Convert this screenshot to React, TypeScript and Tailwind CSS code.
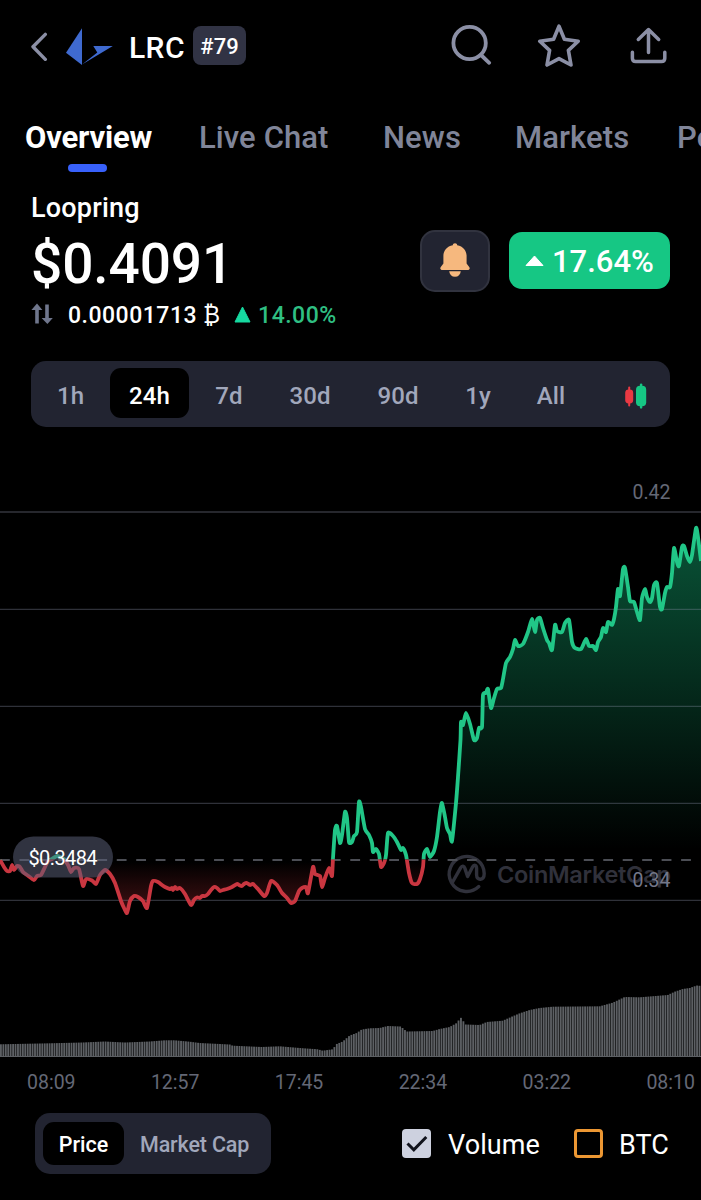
import clsx from "clsx";

type Point = [number, number];

const tabs = [
  { label: "Live Chat", width: "w-[184px]" },
  { label: "News", width: "w-[132px]" },
  { label: "Markets", width: "w-[162px]" },
  { label: "Portfolio", width: "w-[140px]" },
];

const ranges = [
  { label: "1h", width: "w-[79px]" },
  { label: "24h", width: "w-[79px]", active: true },
  { label: "7d", width: "w-[80px]" },
  { label: "30d", width: "w-[82px]" },
  { label: "90d", width: "w-[94px]" },
  { label: "1y", width: "w-[66px]" },
  { label: "All", width: "w-[80px]" },
];

const times = ["08:09", "12:57", "17:45", "22:34", "03:22", "08:10"];

const gridLines = [609, 706, 803, 900];
const BASELINE = 859.5;
const VOLUME_BOTTOM = 1057;

const price: Point[] = [
  [0, 860], [4, 867], [7, 871], [10, 871], [12, 865], [14, 870], [17, 866], [20, 867], [23, 872], [27, 875],
  [34, 880], [37, 876], [41, 875], [45, 867], [48, 861], [52, 859], [57, 856], [64, 859], [68, 865], [71, 872],
  [74, 868], [79, 869], [83, 886], [86, 879], [92, 880.5], [96, 884], [100, 875], [105, 870], [110, 874],
  [115, 883], [121, 901], [124, 908], [127, 913], [130, 901], [134, 896], [138, 897], [143, 901], [147, 908],
  [151, 886], [153, 881], [158, 882], [162, 885], [165, 887], [170, 889], [172, 888], [173, 890], [175, 887],
  [177, 889], [180, 888], [185, 894], [191, 905], [194, 900], [197, 897.5], [200, 898], [202, 896], [205, 896],
  [208, 894], [211, 890], [214, 887], [217, 888], [220, 891], [223, 890], [227, 889], [232, 887], [237, 884],
  [239, 885], [242, 886], [244, 884], [247, 883], [250, 885], [253, 884], [258, 889], [264, 896], [267, 893],
  [271, 881], [277, 885], [282, 893], [287, 898], [291, 903], [295, 901], [299, 891], [302, 888], [306, 887],
  [308, 893], [313, 867], [315, 874], [320, 876], [322, 887], [325, 878], [329, 868], [332, 876], [333, 858],
  [335, 830], [337, 826], [340, 843], [342, 835], [345, 812], [347, 818], [349, 842], [352, 842], [354, 836],
  [357, 832], [359, 802], [361, 807], [365, 829], [369, 835], [372, 843], [373, 852], [376, 849], [379, 854],
  [381, 867], [384, 863], [386, 855], [388, 833], [393, 836], [397, 842], [401, 850], [403, 848], [406, 855],
  [409, 873], [412, 883], [417, 884], [420, 879], [423, 867], [424, 854], [427, 849], [430, 857], [434, 851],
  [437, 837], [440, 812], [442, 803], [445, 817], [447, 828], [450, 834], [452, 841], [456, 803], [458, 777],
  [460.5, 740], [461, 722], [463, 725], [466, 713], [470, 724], [474, 740], [477, 738], [479, 728], [482, 727],
  [483, 695], [486, 693], [488, 689], [491, 708], [494, 698], [497, 689], [501, 688], [503, 679], [506, 663],
  [510, 657], [513, 649], [515, 640], [518, 646], [523, 644], [528, 632], [532, 619], [535, 632], [537, 620],
  [540, 618], [543, 628], [547, 640], [549, 643], [552, 650], [555, 625], [557, 631], [562, 632], [565, 623],
  [569, 620], [572, 642], [575, 648], [581, 649], [586, 639], [589, 646], [593, 646], [596, 650], [598, 642],
  [601, 637], [603, 628], [606, 632], [608, 622], [612, 625], [614, 619], [616, 607], [618, 589], [620, 596],
  [623, 569], [625, 568], [628, 587], [630, 601], [634, 602], [637, 612], [640, 620], [642, 598], [645, 589],
  [647, 597], [650, 602], [652, 598], [654, 585], [657, 583], [660, 607], [662, 609], [665, 593], [667, 587],
  [670, 587], [672, 573], [674, 548], [677, 562], [679, 566], [682, 547], [684, 546], [687, 556], [690, 562],
  [692, 555], [696, 528], [698, 537], [701, 561],
];

// Top edge of the volume histogram
const volume: Point[] = [
  [0, 1044.3], [50, 1043.3], [83, 1042.5], [105, 1041.5], [125, 1042.5], [150, 1041.5], [165, 1040.3],
  [175, 1040.3], [190, 1041.7], [200, 1043], [230, 1044.5], [233, 1045.7], [262, 1047], [280, 1046.3],
  [300, 1048], [318, 1049.3], [323, 1050.7], [333, 1049.3], [337, 1044], [343, 1041.5], [350, 1035.5],
  [357, 1033], [362, 1029.5], [370, 1028.3], [380, 1028], [388, 1026], [401, 1026.5], [407, 1031.5],
  [433, 1031], [440, 1029], [450, 1027], [457, 1023], [461, 1017.5], [466, 1024.5], [480, 1025], [487, 1022],
  [503, 1020.7], [512, 1016.7], [520, 1013.3], [530, 1010], [540, 1008], [553, 1006.7], [600, 1006.3],
  [613, 1002.7], [625, 997], [640, 997.3], [668, 995], [675, 991.7], [683, 989], [690, 988], [697, 985.5],
  [702, 986],
];

const BAR_COUNT = 288;
const BAR_STEP = 701 / BAR_COUNT;

function volumeTop(x: number) {
  const next = Math.max(1, volume.findIndex(([px]) => px >= x));
  const [x0, y0] = volume[next - 1];
  const [x1, y1] = volume[next];
  return y0 + ((y1 - y0) * (x - x0)) / (x1 - x0);
}

const bars = Array.from({ length: BAR_COUNT }, (_, i) => {
  const x = i * BAR_STEP;
  return { x, top: volumeTop(x + BAR_STEP / 2) };
});

// Cardinal spline through the points, kept tight so the peaks don't overshoot
function smooth(points: Point[]) {
  const k = 0.1;
  return points.reduce((d, [x, y], i) => {
    if (i === 0) return `M${x},${y}`;
    const [px, py] = points[i - 1];
    const [bx, by] = points[Math.max(0, i - 2)];
    const [nx, ny] = points[Math.min(points.length - 1, i + 1)];
    return `${d}C${px + (x - bx) * k},${py + (y - by) * k} ${x - (nx - px) * k},${y - (ny - py) * k} ${x},${y}`;
  }, "");
}

const linePath = smooth(price);
const areaPath = `${linePath}L701,${BASELINE}L0,${BASELINE}Z`;

function Header() {
  return (
    <header className="flex h-[92px] items-center pl-[30px] pr-[34px]">
      <svg className="h-[30px] w-[18px]" viewBox="0 0 18 30" fill="none">
        <path d="M15.3 3.4 3 15.7 15.3 28.4" stroke="#8b8fa5" strokeWidth="3.4" strokeLinecap="round" strokeLinejoin="round" />
      </svg>
      <svg className="ml-[18px] h-[38px] w-[48px]" viewBox="0 0 48 38" fill="#3f6ad0">
        <path d="M16 1.3 0 25.7 16 38Z" />
        <path d="M16 37.4 46.8 19H27.3L31.3 25.4Z" />
      </svg>
      <div className="ml-[15px] w-[64px] pt-[3px] text-[30px] leading-9 font-medium tracking-[0.4px] text-white">LRC</div>
      <span className="mb-px flex h-[39px] w-[53px] items-center justify-center rounded-lg bg-[#313344] pt-[2px] text-[22px] font-medium text-white">
        #79
      </span>
      <div className="mb-[2px] ml-auto flex items-center">
        <svg className="h-[44px] w-[44px]" viewBox="0 0 44 44" fill="none" stroke="#8b8fa5" strokeWidth="3.8" strokeLinecap="round">
          <circle cx="19.6" cy="20" r="16.2" />
          <path d="m31 32 8.2 7.8" />
        </svg>
        <svg className="ml-[43px] h-[44px] w-[44px]" viewBox="0 0 44 44" fill="none" stroke="#8b8fa5" strokeWidth="3.6" strokeLinejoin="round">
          <path d="M22 3.2 27.4 16.2 41.2 18.2 31.4 27.4 34 42 22 35.6 10 42 12.6 27.4 2.8 18.2 16.6 16.2Z" />
        </svg>
        <svg className="ml-[49px] h-[44px] w-[37px]" viewBox="0 0 37 44" fill="none" stroke="#8b8fa5" strokeWidth="3.5" strokeLinecap="round" strokeLinejoin="round">
          <path d="M18.5 29.5V7M8.3 16.5 18.5 6.6 28.7 16.5M2.4 29.2V35.2Q2.4 38.5 5.7 38.5H31.5Q34.8 38.5 34.8 35.2V29.2" />
        </svg>
      </div>
    </header>
  );
}

function TabBar() {
  return (
    <nav className="flex h-[98px] overflow-hidden pl-[25px] text-[31px] leading-[36px] whitespace-nowrap">
      <div className="flex w-[174px] shrink-0 flex-col pt-[28px] font-bold text-white">
        <span className="tracking-[-0.2px]">Overview</span>
        <span className="mt-[8px] ml-[43px] h-[8px] w-[39px] rounded-full bg-[#3861fb]" />
      </div>
      {tabs.map((tab) => (
        <div key={tab.label} className={clsx("shrink-0 pt-[28px] font-medium tracking-[0.1px] text-[#808599]", tab.width)}>
          {tab.label}
        </div>
      ))}
    </nav>
  );
}

function PriceSummary() {
  return (
    <section className="flex h-[171px] justify-between pt-px pl-[31px] pr-[31px] text-white">
      <div>
        <div className="h-[35px] text-[27px] leading-[35px] font-medium tracking-[0.2px]">Loopring</div>
        <div className="h-[76px] text-[55px] leading-[76px] font-medium tracking-[-0.1px]">$0.4091</div>
        <div className="flex h-[28px] items-center text-[23px] leading-[28px] font-medium">
          <svg className="mb-[4px] h-[22px] w-[23px]" viewBox="0 0 23 22" fill="#6f768c">
            <path d="M6 .5 11.4 7H7.8V20.5H4.2V7H.4ZM14.2 1.5H17.8V15H21.8L16.4 21 10.6 15H14.2Z" />
          </svg>
          <span className="ml-[14px] tracking-[0.5px]">0.00001713</span>
          <span className="ml-[6px] font-normal">₿</span>
          <svg className="mb-[3px] ml-[14px] h-[17px] w-[17px]" viewBox="0 0 17 17">
            <path d="M8.5 1 16 16H1Z" fill="#16d9a0" stroke="#16d9a0" strokeLinejoin="round" />
          </svg>
          <span className="ml-[7px] tracking-[0.5px] text-[#2fbf83]">14.00%</span>
        </div>
      </div>
      <div className="flex items-start gap-[19px] pt-[39px]">
        <div className="flex h-[62px] w-[70px] items-center justify-center rounded-[15px] border-2 border-[#31333f] bg-[#222431]">
          <svg className="mb-[2px] h-[36px] w-[32px]" viewBox="0 0 32 36" fill="#f6b87e">
            <path d="M16 1.2C17.3 1.2 18.2 2 18.2 3.3 24 4.3 27.6 8.6 27.6 14V21.5L30.4 25.3Q31.4 27.5 29.4 27.9H2.6Q.6 27.5 1.6 25.3L4.4 21.5V14C4.4 8.6 8 4.3 13.8 3.3 13.8 2 14.7 1.2 16 1.2Z" />
            <path d="M10.2 29.3H21.8C21.4 32.8 19.3 34.8 16 34.8S10.6 32.8 10.2 29.3Z" />
          </svg>
        </div>
        <div className="mt-[2px] flex h-[57px] w-[161px] items-center rounded-[13px] bg-[#16c784] pl-[16px]">
          <svg className="h-[12px] w-[19px]" viewBox="0 0 19 12">
            <path d="M9.5 1 18 10.5H1Z" fill="#fff" stroke="#fff" strokeLinejoin="round" />
          </svg>
          <span className="ml-[8px] pt-[4px] text-[31px] font-medium">17.64%</span>
        </div>
      </div>
    </section>
  );
}

function RangePicker() {
  return (
    <div className="mx-[31px] flex h-[66px] items-center rounded-[15px] bg-[#222431] text-[24px] font-medium text-[#a1a7bb]">
      {ranges.map((range) => (
        <div
          key={range.label}
          className={clsx(
            "mb-[2px] flex h-[50px] items-center justify-center pt-[5px] tracking-[0.1px]",
            range.width,
            range.active && "rounded-[11px] bg-black text-white",
          )}
        >
          {range.label}
        </div>
      ))}
      <svg className="mt-[3px] ml-[33px] h-[26px] w-[24px]" viewBox="0 0 24 26">
        <rect x="1.2" y="6.5" width="8" height="14" rx="3.4" fill="#ea3943" />
        <rect x="4.2" y="3.4" width="2" height="20" rx="1" fill="#ea3943" />
        <rect x="12" y="2.8" width="10.2" height="20.4" rx="4" fill="#16c784" />
        <rect x="15.9" y=".4" width="2.4" height="25.2" rx="1.2" fill="#16c784" />
      </svg>
    </div>
  );
}

function PriceChart() {
  return (
    <svg className="mt-[43px] block h-[590px] w-[701px]" viewBox="0 470 701 590" fill="none">
      <defs>
        <linearGradient id="gain" gradientUnits="userSpaceOnUse" x1="0" y1="528" x2="0" y2="850">
          <stop offset="0" stopColor="#16c784" stopOpacity="0.42" />
          <stop offset="1" stopColor="#16c784" stopOpacity="0" />
        </linearGradient>
        <linearGradient id="loss" gradientUnits="userSpaceOnUse" x1="0" y1="862" x2="0" y2="914">
          <stop offset="0" stopColor="#ea3943" stopOpacity="0" />
          <stop offset="1" stopColor="#ea3943" stopOpacity="0.3" />
        </linearGradient>
        <clipPath id="above">
          <rect x="0" y="470" width="701" height={BASELINE - 470} />
        </clipPath>
        <clipPath id="below">
          <rect x="0" y={BASELINE} width="701" height="100" />
        </clipPath>
      </defs>

      {/* Watermark */}
      <g stroke="#30313b" strokeWidth="3.4" strokeLinecap="round" strokeLinejoin="round">
        <path d="M478.8 886.6A17.5 17.5 0 1 1 484.2 873.5C484.2 880.8 476.6 881 476.6 875V868.5C476.6 864.6 474 864.4 472.4 867.2L467.6 876.5 465 868.6C464 865.4 462 865.4 460.6 867.8L452.6 882" />
      </g>
      <text x="497" y="883" textLength="174" fontSize="23.5" fontWeight="600" fill="#30313b" className="font-['Inter',sans-serif]">
        CoinMarketCap
      </text>

      <path d={areaPath} fill="url(#gain)" clipPath="url(#above)" />
      <path d={areaPath} fill="url(#loss)" clipPath="url(#below)" />

      <path d="M0 512H701" stroke="#26272d" strokeWidth="2" />
      {gridLines.map((y) => (
        <path key={y} d={`M0 ${y + 0.4}H701`} stroke="#8b8fa8" strokeOpacity="0.34" strokeWidth="1.4" />
      ))}
      <path d={`M0 ${BASELINE + 0.5}H692`} stroke="#4c4e55" strokeWidth="2" strokeDasharray="9.8 9.66" />

      <path d={linePath} stroke="#21c687" strokeWidth="3.8" strokeLinejoin="round" clipPath="url(#above)" />
      <path d={linePath} stroke="#c93640" strokeWidth="3.8" strokeLinejoin="round" clipPath="url(#below)" />

      {/* Volume */}
      <path d={`M0 ${VOLUME_BOTTOM - 0.5}H701`} stroke="#5d6065" />
      {bars.map((bar) => (
        <rect key={bar.x} x={bar.x} y={bar.top} width="1.85" height={VOLUME_BOTTOM - bar.top} fill="#5d6064" />
      ))}

      <g fontSize="19.5" textAnchor="end" fill="#646876">
        <text x="670.5" y="499">0.42</text>
        <text x="670.5" y="886.5" fill="#73778a">0.34</text>
      </g>

      {/* Opening price marker */}
      <rect x="13" y="836.5" width="100" height="41" rx="20.5" fill="#5a6078" fillOpacity="0.53" />
      <text x="28.5" y="865" fontSize="20" textLength="69" fill="#fff">$0.3484</text>
    </svg>
  );
}

function ChartFooter() {
  return (
    <footer className="mt-[18px] flex h-[61px] items-center pl-[35px] text-white">
      <div className="flex h-[61px] w-[236px] items-center rounded-[15px] bg-[#222431] pl-[8px] text-[21.5px] font-medium">
        <div className="flex h-[43px] w-[81px] items-center justify-center rounded-[11px] bg-black pt-[3px]">Price</div>
        <div className="ml-[16px] pt-[3px] tracking-[-0.15px] text-[#a1a7bb]">Market Cap</div>
      </div>
      <div className="ml-[131px] flex h-[29px] w-[29px] items-center justify-center rounded-[4px] bg-[#cdd1df]">
        <svg className="mb-[2px] h-[20px] w-[24px]" viewBox="0 0 24 20" fill="none">
          <path d="m2.5 10.5 6.3 6.3L21.3 4" stroke="#11131c" strokeWidth="3" />
        </svg>
      </div>
      <div className="ml-[17px] w-[109px] pt-[3px] text-[27px] tracking-[0.1px]">Volume</div>
      <div className="ml-[17px] h-[29px] w-[29px] shrink-0 rounded-[4px] border-[3px] border-[#ec9733]" />
      <div className="ml-[16px] pt-[3px] text-[27px]">BTC</div>
    </footer>
  );
}

export default function App() {
  return (
    <main className="flex h-[1200px] w-[701px] flex-col overflow-hidden bg-black font-['Roboto',sans-serif]">
      <Header />
      <TabBar />
      <PriceSummary />
      <RangePicker />
      <PriceChart />
      <div className="mt-[10px] flex h-[25px] items-center justify-between pl-[27px] pr-[6px] text-[19.5px] leading-[25px] text-[#646876]">
        {times.map((time) => (
          <span key={time}>{time}</span>
        ))}
      </div>
      <ChartFooter />
    </main>
  );
}
